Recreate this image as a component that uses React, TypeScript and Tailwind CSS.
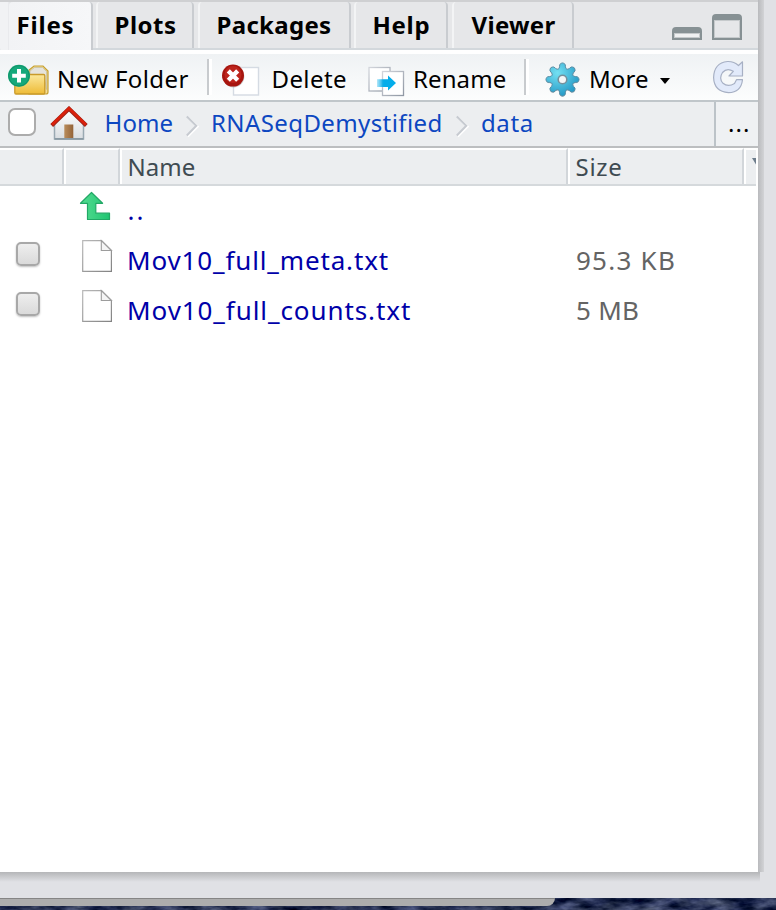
import type { ReactNode } from 'react';

function TabItem({ label, className, textClass, active = false }: { label: string; className: string; textClass: string; active?: boolean }) {
  return (
    <div
      className={`flex h-[46px] shrink-0 items-start rounded-t-[4px] border-r-2 border-[#c9ccd0] font-bold text-black ${
        active ? 'bg-linear-to-r from-[#f2f3f5] to-[#f6f7f9]' : 'border-l-2 border-l-[#f3f4f5] bg-[#e6e7e9]'
      } ${className}`}
    >
      <span className={`whitespace-nowrap text-[24px] leading-[46px] ${textClass}`}>{label}</span>
    </div>
  );
}

function Label({ children, className }: { children: ReactNode; className: string }) {
  return <span className={`shrink-0 whitespace-nowrap text-[24px] leading-[46px] ${className}`}>{children}</span>;
}

function Separator() {
  return <div className="mt-[5px] h-9 w-[5px] shrink-0 border-l-2 border-[#c8cbce] bg-white" />;
}

function NewFolderIcon() {
  return (
    <svg width="42" height="34" viewBox="8 63 42 34" className="block shrink-0">
      <defs>
        <linearGradient id="folder" x1="0" y1="0" x2="0" y2="1">
          <stop offset="0" stopColor="#fbe89c" />
          <stop offset="1" stopColor="#eebb36" />
        </linearGradient>
      </defs>
      <path d="M29 92V70l5-4h9l5 5v21q0 2-2 2H29z" fill="#f3dc94" stroke="#c6a033" strokeWidth="1.2" />
      <path d="M30 75v-4l4.500-3.500h8l4 4v18l-2-12z" fill="#e5e3dc" stroke="#bdb797" strokeWidth="0.6" />
      <rect x="14.800" y="74.500" width="30" height="19.500" rx="1.2" fill="url(#folder)" stroke="#c99a2a" strokeWidth="1.3" />
      <circle cx="19" cy="75.800" r="11" fill="#15a97b" />
      <circle cx="19" cy="75.800" r="10.200" fill="none" stroke="#129268" strokeWidth="1" />
      <path d="M19 69v13.600M12.200 75.800h13.600" stroke="#fff" strokeWidth="4" />
    </svg>
  );
}

function DeleteIcon() {
  return (
    <svg width="39" height="34" viewBox="221 63 39 34" className="block shrink-0">
      <rect x="233.500" y="67.500" width="25" height="27.500" fill="#fff" stroke="#d5dbe3" strokeWidth="1.4" />
      <circle cx="233.600" cy="76.600" r="10.800" fill="#777" opacity="0.35" />
      <circle cx="233" cy="75.600" r="11" fill="#a7150f" />
      <circle cx="233" cy="74.500" r="8.500" fill="#bd241c" />
      <path d="M228.300 70.900l9.400 9.400M237.700 70.900l-9.400 9.400" stroke="#fff" strokeWidth="4.400" />
    </svg>
  );
}

function RenameIcon() {
  return (
    <svg width="37" height="34" viewBox="368 63 37 34" className="block shrink-0">
      <defs>
        <linearGradient id="sheet" x1="0" y1="0" x2="1" y2="1">
          <stop offset="0" stopColor="#d3d6dc" />
          <stop offset="1" stopColor="#8f97a3" />
        </linearGradient>
        <linearGradient id="move" x1="0" y1="0" x2="1" y2="0">
          <stop offset="0" stopColor="#04adea" stopOpacity="0.3" />
          <stop offset="0.35" stopColor="#04adea" />
        </linearGradient>
      </defs>
      <rect x="369" y="67.500" width="21" height="23.500" fill="#fff" stroke="url(#sheet)" strokeWidth="1.3" />
      <rect x="382.500" y="71.500" width="21" height="24" fill="#fff" stroke="url(#sheet)" strokeWidth="1.3" />
      <path d="M377 79.200h11v-3.700l8 7.500-8 7.600v-3.700h-11z" fill="url(#move)" />
    </svg>
  );
}

const gearPath = Array.from({ length: 8 }, (_, i) => {
  const step = (angle: number, r: number) => {
    const a = ((i * 45 + angle - 90) * Math.PI) / 180;
    return `${(17.5 + Math.cos(a) * r).toFixed(2)} ${(17.5 + Math.sin(a) * r).toFixed(2)}`;
  };
  return `${i ? 'L' : 'M'}${step(-13, 13)}L${step(-10.5, 15.2)}Q${step(0, 18.2)} ${step(10.5, 15.2)}L${step(13, 13)}Q${step(22.5, 9.6)} ${step(32, 13)}`;
}).join('') + 'Z';

function GearIcon() {
  return (
    <svg width="35" height="36" viewBox="0 0 35 36" className="block shrink-0">
      <defs>
        <radialGradient id="gear" cx="0.35" cy="0.3" r="0.7">
          <stop offset="0" stopColor="#74e0f2" />
          <stop offset="1" stopColor="#279bc7" />
        </radialGradient>
      </defs>
      <path d={gearPath} transform="translate(0 .8)" fill="#999" opacity="0.5" />
      <path d={gearPath} fill="url(#gear)" stroke="#5b8ea6" strokeWidth="1" strokeLinejoin="round" />
      <circle cx="17.500" cy="17.500" r="4.300" fill="#f4f6f7" stroke="#75909c" strokeWidth="1.600" />
    </svg>
  );
}

function RefreshIcon() {
  return (
    <svg width="32" height="34" viewBox="712 60 32 34" className="block shrink-0">
      <path
        d="M738.500 65.500L742.500 61.800V76H729l4.300-4.700Q727 67.200 722.500 72.500Q718.500 78.500 723 83.300Q728 87.500 734.500 83.500L736.500 79.700H742.500Q741 92.500 728.500 92.600Q714 91.500 713.600 77.500Q714 63 727.500 61.500Q734 61.300 738.500 65.500Z"
        fill="#e2eafa" stroke="#a7b0c4" strokeWidth="1.200" strokeLinejoin="round"
      />
    </svg>
  );
}

function HomeIcon() {
  return (
    <svg width="38" height="35" viewBox="49.500 105.500 38 35" className="block shrink-0">
      <defs>
        <linearGradient id="wall" x1="0" y1="0" x2="0" y2="1">
          <stop offset="0" stopColor="#fff" />
          <stop offset="1" stopColor="#d9dde1" />
        </linearGradient>
        <linearGradient id="door" x1="0" y1="0" x2="1" y2="0">
          <stop offset="0" stopColor="#b98d5c" />
          <stop offset="1" stopColor="#946338" />
        </linearGradient>
      </defs>
      <path d="M54 122.500L68.500 109 83 122.500v16H54z" fill="url(#wall)" stroke="#9aa9b2" strokeWidth="1.500" />
      <path d="M54 138.400h29" stroke="#8a9aa4" strokeWidth="1.800" />
      <rect x="63.800" y="124" width="9" height="13.500" fill="url(#door)" />
      <path d="M51.200 125L68.500 108.200 85.800 125" fill="none" stroke="#9c2419" strokeWidth="4" />
      <path d="M51.600 124.300L68.500 107.800 85.400 124.300" fill="none" stroke="#db200b" strokeWidth="2.600" />
    </svg>
  );
}

function Chevron() {
  return (
    <svg width="14" height="24" viewBox="0 0 14 24" className="block shrink-0">
      <path d="M1.800 3.500L11.800 12.500 1.800 22.500" fill="none" stroke="#fff" strokeWidth="2" />
      <path d="M0.800 2.500L10.300 11.700 0.800 21.500" fill="none" stroke="#c7cbd1" strokeWidth="2" />
    </svg>
  );
}

function FileIcon() {
  return (
    <svg width="32" height="34" viewBox="81 239 32 34" className="block shrink-0">
      <defs>
        <linearGradient id="page" x1="0" y1="0" x2="1" y2="1">
          <stop offset="0" stopColor="#b9b9b9" />
          <stop offset="1" stopColor="#838383" />
        </linearGradient>
      </defs>
      <path d="M82.700 240.600h18.800l9.900 9.900v20.900H82.700z" fill="#fff" stroke="url(#page)" strokeWidth="1.200" />
      <path d="M101.300 240.600v9.900h10.100z" fill="#f5f5f5" stroke="#9c9c9c" strokeWidth="1.100" />
    </svg>
  );
}

function FileRow({ name, nameClass, size, sizeClass }: { name: string; nameClass: string; size: string; sizeClass: string }) {
  return (
    <div className="flex h-[50px]">
      <div className="w-[81px] shrink-0 pl-4 pt-[6px]">
        <div className="h-6 w-6 rounded-[5px] border-2 border-[#a8a8a8] bg-linear-to-b from-[#eeeeee] to-[#dadada] shadow-[0_1px_2px_rgba(0,0,0,0.25)]" />
      </div>
      <div className="w-[46px] shrink-0 pt-[3px]"><FileIcon /></div>
      <span className={`w-[449px] shrink-0 whitespace-nowrap text-[26px] leading-[49px] text-[#0000a8] ${nameClass}`}>{name}</span>
      <span className={`whitespace-nowrap text-[26px] leading-[49px] text-[#646464] ${sizeClass}`}>{size}</span>
    </div>
  );
}

function HeaderCell({ className, children }: { className: string; children?: ReactNode }) {
  return (
    <div className={`h-full shrink-0 overflow-hidden border-t-2 border-r-2 border-t-white border-r-[#d2d6da] ${className}`}>
      {children}
    </div>
  );
}

export default function App() {
  return (
    <div className="flex h-[910px] w-[776px] flex-col overflow-hidden bg-[#e0e1e5] font-['Noto_Sans','Open_Sans',sans-serif] text-black">
      <div className="flex h-[872px] shrink-0">
        <div className="flex w-[758px] shrink-0 flex-col bg-white">
          <div className="h-[2px] shrink-0 bg-[#cfd0d2]" />
          <div className="flex h-[48px] shrink-0 border-b-2 border-[#d3d8dc] bg-[#e6e7e9]">
            <div className="h-[50px] w-[9px] shrink-0 rounded-bl-[4px] border-r border-[#e9eaed] bg-[#f1f2f4]" />
            <TabItem active label="Files" className="h-[50px] w-[84px] pl-[7.500px]" textClass="tracking-[0.8px]" />
            <TabItem label="Plots" className="ml-[3px] w-[98px] pl-[16.500px]" textClass="tracking-[0.5px]" />
            <TabItem label="Packages" className="ml-1 w-[153px] pl-[16.500px]" textClass="tracking-[0.3px]" />
            <TabItem label="Help" className="ml-[3px] w-[94px] pl-[16.500px]" textClass="tracking-[0.7px]" />
            <TabItem label="Viewer" className="ml-1 w-[122px] pl-[17.500px]" textClass="tracking-[0.3px]" />
            <div className="ml-[98px] flex items-end gap-[10px] pb-2">
              <div className="h-[13px] w-[30px] rounded-t-[4px] border-2 border-t-[6px] border-[#879194] bg-[#f0f1f2] shadow-[inset_0_0_0_1px_#c6cacc]" />
              <div className="h-[26px] w-[30px] rounded-t-[4px] border-2 border-t-[6px] border-[#879194] bg-[#e6e7e9] shadow-[inset_0_0_0_1px_#c6cacc]" />
            </div>
          </div>
          <div className="h-1 shrink-0 bg-white" />

          <div className="flex h-[48px] shrink-0 border-b-2 border-[#c0c6ca] bg-linear-to-b from-[#eff2f4] to-[#fcfdfd]">
            <div className="ml-2 mt-[9px]"><NewFolderIcon /></div>
            <Label className="ml-[7px] mt-[2px] w-[150px] tracking-[0.4px]">New Folder</Label>
            <Separator />
            <div className="ml-[9px] mt-[9px]"><DeleteIcon /></div>
            <Label className="ml-[11.500px] mt-[2px] w-[96.500px] tracking-[0.4px]">Delete</Label>
            <div className="mt-[9px]"><RenameIcon /></div>
            <Label className="ml-[8px] mt-[2px] w-[111px] tracking-[0.1px]">Rename</Label>
            <Separator />
            <div className="ml-[15.500px] mt-[8px]"><GearIcon /></div>
            <Label className="ml-[9.500px] mt-[2px] w-[70.500px] tracking-[0.1px]">More</Label>
            <div className="mt-[24px] h-0 border-x-[5px] border-t-[6px] border-x-transparent border-t-black" />
            <div className="ml-[42.500px] mt-[6px]"><RefreshIcon /></div>
          </div>

          <div className="flex h-[46px] shrink-0 border-b-2 border-[#bcbec0] bg-[#eceef0] text-[#0d47c1]">
            <div className="ml-2 mt-[6px] h-7 w-7 shrink-0 rounded-[7px] border-2 border-[#acacac] bg-white" />
            <div className="ml-[13.500px] mt-[3.500px]"><HomeIcon /></div>
            <Label className="ml-[17px] -mt-[2px] w-[81.500px] tracking-[0.1px]">Home</Label>
            <div className="mt-3"><Chevron /></div>
            <Label className="ml-[11px] -mt-[2px] w-[244.500px] tracking-[0.4px]">RNASeqDemystified</Label>
            <div className="mt-3"><Chevron /></div>
            <Label className="ml-[11.500px] -mt-[2px] w-[233px] tracking-[0.6px]">data</Label>
            <div className="h-[44px] flex-1 border-l-2 border-[#bcc3c8] bg-[#eff1f3] pl-[12px] text-black">
              <Label className="-mt-[2px] block tracking-[1.1px]">...</Label>
            </div>
          </div>

          <div className="mr-[2px] flex h-[38px] shrink-0 border-b-2 border-[#d5d9dc] bg-[#eceef0] text-[#3f4b52]">
            <HeaderCell className="w-[64px]" />
            <HeaderCell className="w-[56px] border-l-2 border-l-white" />
            <HeaderCell className="w-[448px] border-l-2 border-l-white pl-[5.500px]">
              <Label className="-mt-[6px] block">Name</Label>
            </HeaderCell>
            <HeaderCell className="w-[176px] border-l-2 border-l-white pl-[5.500px]">
              <Label className="-mt-[6px] block tracking-[0.7px]">Size</Label>
            </HeaderCell>
            <div className="h-full flex-1 overflow-hidden border-l-2 border-t-2 border-white pl-[6px] pt-2">
              <div className="h-0 w-0 border-x-[5px] border-t-[8px] border-x-transparent border-t-[#6e7d8c]" />
            </div>
          </div>

          <div className="flex h-[50px] shrink-0">
            <div className="ml-[79px] mt-[5px] w-[48.500px] shrink-0">
              <svg width="32" height="31" viewBox="79 191 32 31" className="block">
                <defs>
                  <linearGradient id="up" x1="0" y1="0" x2="1" y2="0">
                    <stop offset="0" stopColor="#55dc91" />
                    <stop offset="1" stopColor="#20c572" />
                  </linearGradient>
                </defs>
                <path d="M91.500 192.500L80.500 203.300h7v16.200h22v-6.300H95.800v-9.900h6.800z" fill="url(#up)" stroke="#22a866" strokeWidth="1.200" strokeLinejoin="round" />
              </svg>
            </div>
            <span className="text-[26px] leading-[49px] tracking-[2px] text-[#0000a8]">..</span>
          </div>
          <FileRow name="Mov10_full_meta.txt" nameClass="tracking-[0.86px]" size="95.3 KB" sizeClass="tracking-[1.25px]" />
          <FileRow name="Mov10_full_counts.txt" nameClass="tracking-[0.92px]" size="5 MB" sizeClass="tracking-[0.3px]" />
        </div>
        <div className="w-[6px] shrink-0 bg-linear-to-r from-[#b9babd] to-[#d2d3d6]" />
      </div>
      <div className="h-[10px] w-[760px] shrink-0 bg-linear-to-b from-[#b5b6b8] to-[#e0e1e5]" />
      <div className="h-4 shrink-0" />
      <div className="grid h-3 shrink-0">
        <svg width="776" height="12" className="col-start-1 row-start-1 block">
          <filter id="water" x="0" y="0" width="100%" height="100%" colorInterpolationFilters="sRGB">
            <feTurbulence type="fractalNoise" baseFrequency="0.045 0.12" numOctaves="4" seed="4" />
            <feColorMatrix values="0.6 0.1 0 0 -0.19  0.6 0.1 0 0 -0.15  0.6 0.2 0 0 -0.07  0 0 0 0 1" />
          </filter>
          <rect width="776" height="12" fill="#202d51" filter="url(#water)" />
        </svg>
        <div className="z-10 col-start-1 row-start-1 h-2 w-[555px] rounded-br-[8px] border-t border-[#858585] bg-[#adadad]" />
      </div>
    </div>
  );
}
